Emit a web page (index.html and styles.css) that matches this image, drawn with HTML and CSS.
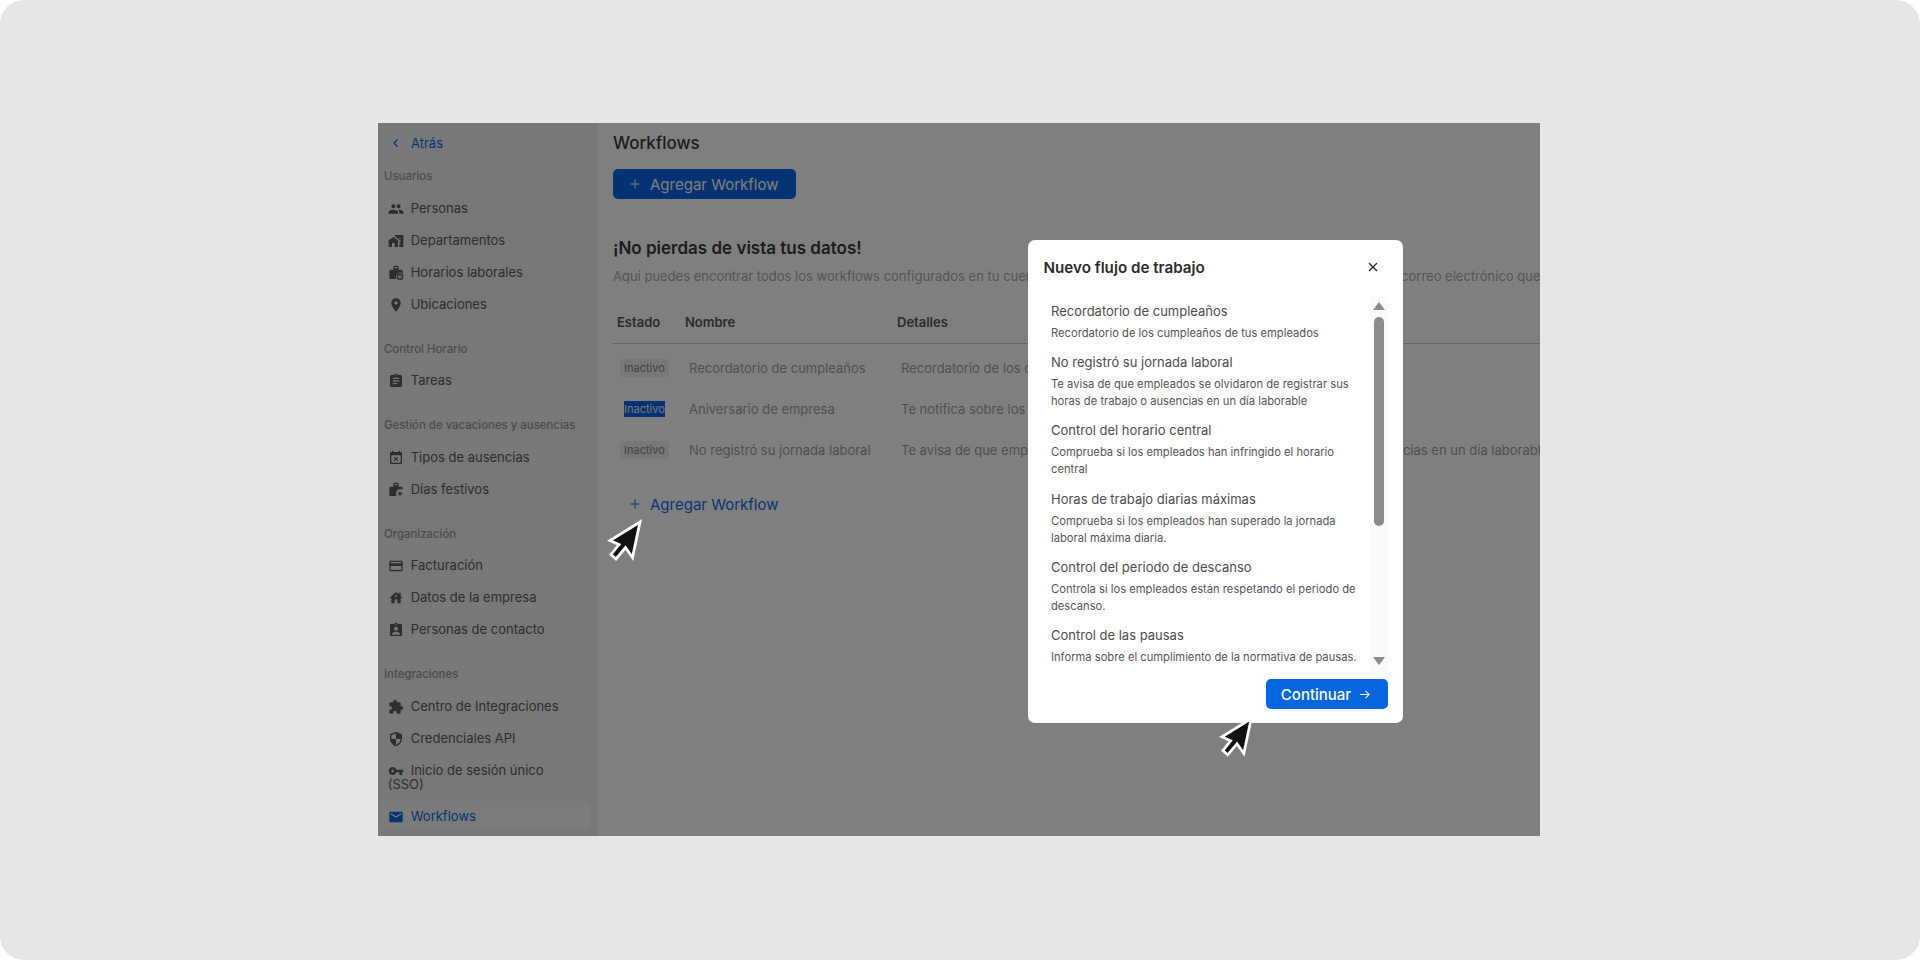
FILE: index.html
```html
<!DOCTYPE html>
<html lang="es">
<head>
<meta charset="utf-8">
<title>Workflows</title>
<link rel="stylesheet" href="styles.css">
</head>
<body>
<div class="stage">
  <div class="window">
    <aside class="sidebar">
      <a class="back"><svg class="chev" viewBox="0 0 12 12"><path d="M7.500 2.500 4 6l3.500 3.500"/></svg>Atrás</a>
      <section class="group first">
        <h4>Usuarios</h4>
        <a class="item"><svg class="ic" viewBox="0 0 24 24"><path d="M16 11c1.660 0 2.990-1.340 2.990-3S17.660 5 16 5c-1.660 0-3 1.340-3 3s1.340 3 3 3zm-8 0c1.660 0 2.990-1.340 2.990-3S9.660 5 8 5C6.340 5 5 6.340 5 8s1.340 3 3 3zm0 2c-2.330 0-7 1.170-7 3.500V19h14v-2.500c0-2.330-4.670-3.500-7-3.500zm8 0c-.29 0-.62.02-.97.05 1.160.84 1.970 1.970 1.970 3.450V19h6v-2.500c0-2.330-4.670-3.500-7-3.500z"/></svg>Personas</a>
        <a class="item"><svg class="ic" viewBox="0 0 24 24"><path d="M1 11v10h5v-6h4v6h5V11L8 6zM10 3v1.970l7 5V11h2v2h-2v2h2v2h-2v4h6V3H10zm9 6h-2V7h2v2z"/></svg>Departamentos</a>
        <a class="item"><svg class="ic" viewBox="0 0 24 24"><path d="M10 5h4V3h-4zM16 7h4c1.100 0 2 .9 2 2v3.600A6.500 6.500 0 0 0 12.600 21H4c-1.100 0-2-.9-2-2V9c0-1.100.9-2 2-2h4V3c0-1.100.9-2 2-2h4c1.100 0 2 .9 2 2z"/><path fill-rule="evenodd" d="M18 12.500a5 5 0 1 0 0 10 5 5 0 0 0 0-10zm0 2a3 3 0 1 1 0 6 3 3 0 0 1 0-6z"/><path d="M17.500 15.500h1v2l1.500 1-.5.8-2-1.300z"/></svg>Horarios laborales</a>
        <a class="item"><svg class="ic" viewBox="0 0 24 24"><path d="M12 2C8.130 2 5 5.130 5 9c0 5.250 7 13 7 13s7-7.750 7-13c0-3.870-3.130-7-7-7zm0 9.500c-1.380 0-2.500-1.120-2.500-2.500s1.120-2.500 2.500-2.500 2.500 1.120 2.500 2.500-1.120 2.500-2.500 2.500z"/></svg>Ubicaciones</a>
      </section>
      <section class="group">
        <h4>Control Horario</h4>
        <a class="item"><svg class="ic" viewBox="0 0 24 24"><path d="M19 3h-4.180C14.400 1.840 13.300 1 12 1c-1.300 0-2.400.84-2.820 2H5c-1.100 0-2 .9-2 2v14c0 1.100.9 2 2 2h14c1.100 0 2-.9 2-2V5c0-1.100-.9-2-2-2zm-7 0c.55 0 1 .45 1 1s-.45 1-1 1-1-.45-1-1 .45-1 1-1zm2 14H7v-2h7v2zm3-4H7v-2h10v2zm0-4H7V7h10v2z"/></svg>Tareas</a>
      </section>
      <section class="group">
        <h4>Gestión de vacaciones y ausencias</h4>
        <a class="item"><svg class="ic" viewBox="0 0 24 24"><path d="M9.310 17l2.440-2.440L14.190 17l1.060-1.060-2.440-2.440 2.440-2.440L14.190 10l-2.440 2.440L9.310 10l-1.060 1.060 2.440 2.440-2.440 2.440L9.310 17zM19 3h-1V1h-2v2H8V1H6v2H5c-1.110 0-1.990.9-1.990 2L3 19c0 1.100.89 2 2 2h14c1.100 0 2-.9 2-2V5c0-1.100-.9-2-2-2zm0 16H5V8h14v11z"/></svg>Tipos de ausencias</a>
        <a class="item"><svg class="ic" viewBox="0 0 24 24"><path d="M10 5h4V3h-4zM16 7h4c1.100 0 2 .9 2 2v2.500A7 7 0 0 0 12.700 21H4c-1.100 0-2-.9-2-2V9c0-1.100.9-2 2-2h4V3c0-1.100.9-2 2-2h4c1.100 0 2 .9 2 2z"/><path d="m18 13 1.300 3.200 3.200 1.300-3.200 1.300L18 22l-1.300-3.200-3.200-1.300 3.200-1.300z"/></svg>Días festivos</a>
      </section>
      <section class="group">
        <h4>Organización</h4>
        <a class="item"><svg class="ic" viewBox="0 0 24 24"><path d="M20 4H4c-1.110 0-1.990.89-1.990 2L2 18c0 1.110.89 2 2 2h16c1.110 0 2-.89 2-2V6c0-1.110-.89-2-2-2zm0 14H4v-6h16v6zm0-10H4V6h16v2z"/></svg>Facturación</a>
        <a class="item"><svg class="ic" viewBox="0 0 24 24"><path d="M19 9.300V4h-3v2.600L12 3 2 12h3v8h5v-6h4v6h5v-8h3l-3-2.700zm-9 .7c0-1.100.9-2 2-2s2 .9 2 2h-4z"/></svg>Datos de la empresa</a>
        <a class="item"><svg class="ic" viewBox="0 0 24 24"><path d="M19 3h-4.180C14.400 1.840 13.300 1 12 1c-1.300 0-2.400.84-2.820 2H5c-1.100 0-2 .9-2 2v14c0 1.100.9 2 2 2h14c1.100 0 2-.9 2-2V5c0-1.100-.9-2-2-2zm-7 0c.55 0 1 .45 1 1s-.45 1-1 1-1-.45-1-1 .45-1 1-1zm0 4c1.660 0 3 1.340 3 3s-1.340 3-3 3-3-1.340-3-3 1.340-3 3-3zm6 12H6v-1.400c0-2 4-3.100 6-3.100s6 1.100 6 3.100V19z"/></svg>Personas de contacto</a>
      </section>
      <section class="group">
        <h4>Integraciones</h4>
        <a class="item"><svg class="ic" viewBox="0 0 24 24"><path d="M20.500 11H19V7c0-1.100-.9-2-2-2h-4V3.500C13 2.120 11.880 1 10.500 1S8 2.120 8 3.500V5H4c-1.100 0-1.990.9-1.990 2v3.800H3.500c1.490 0 2.700 1.210 2.700 2.700s-1.210 2.700-2.700 2.700H2V20c0 1.100.9 2 2 2h3.800v-1.500c0-1.490 1.210-2.700 2.700-2.700 1.490 0 2.700 1.210 2.700 2.700V22H17c1.100 0 2-.9 2-2v-4h1.500c1.380 0 2.500-1.120 2.500-2.500S21.880 11 20.500 11z"/></svg>Centro de Integraciones</a>
        <a class="item"><svg class="ic" viewBox="0 0 24 24"><path d="M12 1L3 5v6c0 5.550 3.840 10.740 9 12 5.160-1.260 9-6.450 9-12V5l-9-4zm0 10.990h7c-.53 4.120-3.280 7.790-7 8.940V12H5V6.300l7-3.110v8.800z"/></svg>Credenciales API</a>
        <a class="item"><svg class="ic" viewBox="0 0 24 24"><path d="M12.650 10C11.830 7.670 9.610 6 7 6c-3.310 0-6 2.690-6 6s2.690 6 6 6c2.610 0 4.830-1.670 5.650-4H17v4h4v-4h2v-4H12.650zM7 14c-1.100 0-2-.9-2-2s.9-2 2-2 2 .9 2 2-.9 2-2 2z"/></svg>Inicio de sesión único (SSO)</a>
        <a class="item active"><svg class="ic" viewBox="0 0 24 24"><path d="M20 4H4c-1.100 0-1.990.9-1.990 2L2 18c0 1.100.9 2 2 2h16c1.100 0 2-.9 2-2V6c0-1.100-.9-2-2-2zm0 4l-8 5-8-5V6l8 5 8-5v2z"/></svg>Workflows</a>
      </section>
    </aside>

    <main class="main">
      <h1 class="title">Workflows</h1>
      <a class="btn solid"><svg class="plus" viewBox="0 0 10 10"><path d="M5 .5v9M.5 5h9"/></svg>Agregar Workflow</a>
      <h2 class="heading">¡No pierdas de vista tus datos!</h2>
      <p class="desc">Aquí puedes encontrar todos los workflows configurados en tu cuenta. Recibirás las notificaciones automáticas, en tu buzón de correo electrónico que hayas indicado para cada uno de ellos.</p>
      <div class="table">
        <div class="row head"><span class="c-state">Estado</span><span class="c-name">Nombre</span><span>Detalles</span></div>
        <div class="row"><span class="c-state"><span class="pill">Inactivo</span></span><span class="c-name">Recordatorio de cumpleaños</span><span>Recordatorio de los cumpleaños de tus empleados</span></div>
        <div class="row"><span class="c-state"><span class="pill selected"><span class="sel">Inactivo</span></span></span><span class="c-name">Aniversario de empresa</span><span>Te notifica sobre los aniversarios de tus empleados en la empresa</span></div>
        <div class="row"><span class="c-state"><span class="pill">Inactivo</span></span><span class="c-name">No registró su jornada laboral</span><span>Te avisa de que empleados se olvidaron de registrar sus horas de trabajo o ausencias en un día laborable</span></div>
      </div>
      <a class="btn ghost"><svg class="plus" viewBox="0 0 10 10"><path d="M5 .5v9M.5 5h9"/></svg>Agregar Workflow</a>
    </main>

    <div class="backdrop"></div>

    <div class="modal">
      <header class="modal-head">
        <h3>Nuevo flujo de trabajo</h3>
        <svg class="close" viewBox="0 0 12 12"><path d="M2 2l8 8M10 2l-8 8"/></svg>
      </header>
      <div class="modal-body">
        <ul class="list">
          <li><strong>Recordatorio de cumpleaños</strong><span>Recordatorio de los cumpleaños de tus empleados</span></li>
          <li><strong>No registró su jornada laboral</strong><span>Te avisa de que empleados se olvidaron de registrar sus horas de trabajo o ausencias en un día laborable</span></li>
          <li><strong>Control del horario central</strong><span>Comprueba si los empleados han infringido el horario central</span></li>
          <li><strong>Horas de trabajo diarias máximas</strong><span>Comprueba si los empleados han superado la jornada laboral máxima diaria.</span></li>
          <li><strong>Control del periodo de descanso</strong><span>Controla si los empleados están respetando el periodo de descanso.</span></li>
          <li><strong>Control de las pausas</strong><span>Informa sobre el cumplimiento de la normativa de pausas.</span></li>
        </ul>
        <div class="track">
          <i class="arrow up"></i>
          <i class="thumb"></i>
          <i class="arrow down"></i>
        </div>
      </div>
      <footer class="modal-foot">
        <a class="continue">Continuar<svg class="next" viewBox="0 0 14 14"><path d="M2 7h10M8 3l4 4-4 4"/></svg></a>
      </footer>
    </div>

    <svg class="cursor cursor-a" viewBox="0 0 38 44"><path d="M34 3 26.500 38.500 19.500 28.500 10 40 5 35.500 13 25.500 4 21.500z"/></svg>
    <svg class="cursor cursor-b" viewBox="0 0 38 44"><path d="M34 3 26.500 38.500 19.500 28.500 10 40 5 35.500 13 25.500 4 21.500z"/></svg>
  </div>
</div>
</body>
</html>
```

FILE: styles.css
```css
* { box-sizing: border-box; }
html, body { margin: 0; height: 100%; }
body { background: #fff; font-family: Inter, "Liberation Sans", sans-serif; overflow: hidden; }
h1, h2, h3, h4, p, ul { margin: 0; padding: 0; }
a { display: block; }

.stage { height: 960px; padding: 123px 0 0 378px; background: #e6e6e6; border-radius: 24px; }
.window { position: relative; width: 1162px; height: 713px; display: flex; overflow: hidden; background: #fff; }

.sidebar { width: 220px; flex: none; background: #f0f0f0; padding: 10px 8px 0 3px; color: #5a5a5c; }
.back { display: flex; align-items: center; height: 20px; padding-left: 9px; font-size: 13px; color: #0b6ae6; }
.chev { width: 12px; height: 12px; margin-right: 9px; fill: none; stroke: #0b6ae6; stroke-width: 1.300; }
.group { margin-top: 23.500px; }
.group.first { margin-top: 16px; }
.group h4 { font-size: 11.400px; line-height: 14px; font-weight: 500; color: #999; padding-left: 3px; margin-bottom: 10px; }
.item { font-size: 13px; line-height: 14px; padding: 7.500px 14px 7.500px 6.700px; margin-bottom: 3px; border-radius: 8px; }
.ic { width: 16px; height: 16px; fill: #5a5a5c; vertical-align: -1px; margin: -3px 7px -3px 0; }
.item.active { background: #f7f7f7; color: #0b6ae6; }
.item.active .ic { fill: #0b6ae6; }

.main { flex: 1; min-width: 0; padding: 10px 0 0 15px; background: #fff; overflow: hidden; }
.title { font-size: 17px; line-height: 20px; font-weight: 500; color: #383838; }
.btn { display: flex; align-items: center; width: 183px; height: 30px; margin-top: 16px; border-radius: 5px; padding-left: 17px; font-size: 15px; font-weight: 400; }
.plus { width: 10px; height: 10px; margin-right: 10px; fill: none; stroke: currentColor; stroke-width: 1; }
.btn.solid { background: #0b65e6; color: #fff; }
.btn.ghost { color: #0b6ae6; margin-top: 19px; }
.heading { font-size: 17px; line-height: 22px; font-weight: 600; color: #383838; margin-top: 38px; }
.desc { font-size: 13px; line-height: 18px; color: #aaa; margin-top: 8px; white-space: nowrap; }

.table { margin-top: 15px; }
.row { display: grid; grid-template-columns: 72px 212px 1fr; height: 41px; align-items: center; font-size: 13px; color: #9e9e9e; white-space: nowrap; padding-left: 4px; }
.row.head { grid-template-columns: 68px 212px 1fr; height: 44px; border-bottom: 1px solid #ccc; margin-bottom: 3px; font-weight: 600; color: #555; }
.pill { display: inline-block; height: 18px; line-height: 18px; padding: 0 4px; margin-left: 3px; font-size: 11px; background: #eee; border-radius: 3px; color: #888; }
.pill.selected { background: none; }
.sel { background: #0b65e6; color: #eee; display: inline-block; height: 16px; line-height: 16px; vertical-align: 0; }

.backdrop { position: absolute; inset: 0; background: rgba(0, 0, 0, 0.5); }

.modal { position: absolute; left: 650px; top: 117px; width: 375px; height: 483px; background: #fff; border-radius: 7px; padding: 0 15px 0 15.500px; display: flex; flex-direction: column; }
.modal-head { display: flex; justify-content: space-between; align-items: center; height: 57px; padding-bottom: 3px; padding-right: 9px; }
.modal-head h3 { font-size: 15.200px; font-weight: 600; color: #2b2b2b; }
.close { width: 12px; height: 12px; fill: none; stroke: #222; stroke-width: 1.300; }
.modal-body { display: flex; height: 375px; }
.list { flex: 1; list-style: none; padding: 6px 4px 0 7.500px; overflow: hidden; }
.list li { margin-bottom: 12.200px; }
.list strong { display: block; font-size: 13px; line-height: 16px; font-weight: 400; color: #4c4c4c; margin-bottom: 6px; }
.list span { display: block; font-size: 11.200px; line-height: 17px; color: #555; }
.track { width: 18px; flex: none; background: #fafafa; display: flex; flex-direction: column; align-items: center; padding-top: 5px; }
.thumb { width: 10px; height: 209px; margin-top: 7px; border-radius: 5px; background: #8b8b8b; }
.arrow { width: 0; height: 0; border-left: 6px solid transparent; border-right: 6px solid transparent; }
.arrow.up { border-bottom: 8px solid #8b8b8b; }
.arrow.down { border-top: 8px solid #8b8b8b; margin-top: 131px; }
.modal-foot { display: flex; justify-content: flex-end; margin-top: 7px; }
.continue { display: flex; align-items: center; justify-content: center; width: 122px; height: 30px; padding-right: 2px; border-radius: 5px; background: #0566e0; color: #fff; font-size: 15px; font-weight: 500; }
.next { width: 13px; height: 13px; margin-left: 7px; fill: none; stroke: #fff; stroke-width: 1.100; }

.cursor { position: absolute; width: 38px; height: 44px; fill: #111; stroke: #fff; stroke-width: 2.800; stroke-linejoin: miter; stroke-miterlimit: 8; overflow: visible; }
.cursor-a { left: 228px; top: 396px; }
.cursor-b { left: 839.500px; top: 593px; width: 37px; height: 42.800px; }
```
